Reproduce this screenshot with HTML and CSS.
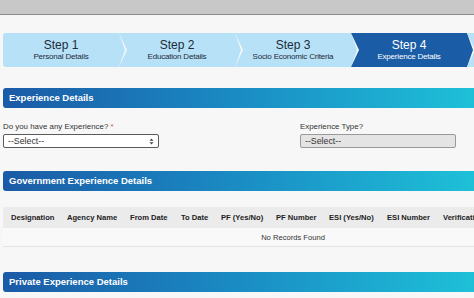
FILE: index.html
```html
<!DOCTYPE html>
<html>
<head>
<meta charset="utf-8">
<link rel="stylesheet" href="styles.css">
</head>
<body>
<div class="topbar"></div>
<div class="page">
  <div class="steps">
    <div class="step first"><div class="st">Step 1</div><div class="sub">Personal Details</div></div>
    <div class="step"><div class="st">Step 2</div><div class="sub">Education Details</div></div>
    <div class="step"><div class="st">Step 3</div><div class="sub">Socio Economic Criteria</div></div>
    <div class="step active"><div class="st">Step 4</div><div class="sub">Experience Details</div></div>
    <div class="step"></div>
  </div>

  <div class="hdr hdr-exp">Experience Details</div>

  <div class="form-row">
    <div class="field">
      <label class="lbl">Do you have any Experience? <span class="req">*</span></label>
      <div class="sel">--Select--
        <svg class="arr" width="5" height="7" viewBox="0 0 5 7"><path d="M2.5 0.5 L4.5 2.8 L0.5 2.8 Z M2.5 6.5 L4.5 4.2 L0.5 4.2 Z" fill="#444"/></svg>
      </div>
    </div>
    <div class="field right">
      <label class="lbl">Experience Type?</label>
      <div class="sel disabled">--Select--</div>
    </div>
  </div>

  <div class="hdr hdr-gov">Government Experience Details</div>

  <div class="tbl-wrap">
    <table class="tbl">
      <thead>
        <tr>
          <th class="c1">Designation</th>
          <th class="c2">Agency Name</th>
          <th class="c3">From Date</th>
          <th class="c4">To Date</th>
          <th class="c5">PF (Yes/No)</th>
          <th class="c6">PF Number</th>
          <th class="c7">ESI (Yes/No)</th>
          <th class="c8">ESI Number</th>
          <th class="c9">Verification</th>
        </tr>
      </thead>
      <tbody>
        <tr><td colspan="9" class="empty">No Records Found</td></tr>
      </tbody>
    </table>
  </div>

  <div class="hdr hdr-priv">Private Experience Details</div>
</div>
</body>
</html>
```

FILE: styles.css
```css
html, body {
  margin: 0;
  padding: 0;
  background: #f7f7f7;
  font-family: "Liberation Sans", Arial, sans-serif;
  overflow: hidden;
  width: 474px;
  height: 298px;
}

.topbar {
  height: 14px;
  background: #c8c8c8;
  border-bottom: 1px solid #8c8c8c;
}

.page {
  padding-left: 3px;
}

.steps {
  display: flex;
  margin-top: 18px;
  height: 34px;
  width: 600px;
}

.step {
  flex: 0 0 122px;
  margin-right: -6px;
  background: #b6e1f7;
  clip-path: polygon(0 0, calc(100% - 6px) 0, 100% 50%, calc(100% - 6px) 100%, 0 100%, 8px 50%);
  display: flex;
  flex-direction: column;
  align-items: center;
  justify-content: center;
  color: #1d2b3a;
  padding-right: 6px;
  box-sizing: border-box;
}

.step.first {
  clip-path: polygon(0 0, calc(100% - 6px) 0, 100% 50%, calc(100% - 6px) 100%, 0 100%);
  border-radius: 3px 0 0 3px;
}

.step.active {
  background: #1b5ca7;
  color: #ffffff;
}

.st {
  font-size: 12px;
  line-height: 13px;
}

.sub {
  font-size: 8px;
  line-height: 10px;
  letter-spacing: -0.2px;
}

.hdr {
  height: 20px;
  line-height: 20px;
  background: linear-gradient(to right, #1b5aa6 0%, #1a8cc4 50%, #1ec0d8 100%);
  color: #ffffff;
  font-weight: bold;
  font-size: 9.5px;
  padding-left: 6px;
  border-radius: 3px 0 0 3px;
}

.hdr-exp { margin-top: 21px; }
.hdr-gov { margin-top: 23px; }
.hdr-priv { margin-top: 25px; }

.form-row {
  display: flex;
  margin-top: 13px;
}

.field {
  width: 156px;
  display: flex;
  flex-direction: column;
}

.field.right {
  margin-left: 141px;
}

.lbl {
  font-size: 7.9px;
  color: #333333;
  line-height: 11px;
  height: 11px;
  margin-bottom: 2px;
}

.req { color: #d9534f; }

.sel {
  position: relative;
  height: 14px;
  box-sizing: border-box;
  border: 1px solid #5a5a5a;
  border-radius: 2px;
  background: #ffffff;
  font-size: 8.8px;
  line-height: 12px;
  padding-left: 4px;
  color: #333333;
}

.sel.disabled {
  background: #e4e4e4;
  border-color: #9a9a9a;
}

.arr {
  position: absolute;
  right: 4px;
  top: 3px;
}

.tbl-wrap {
  margin-top: 16px;
  width: 580px;
}

.tbl {
  border-collapse: collapse;
  table-layout: fixed;
  width: 580px;
  font-size: 7.6px;
  color: #222222;
}

.tbl th {
  background: #ebebeb;
  font-weight: bold;
  height: 21px;
  padding: 0;
  text-align: left;
  white-space: nowrap;
  overflow: hidden;
}

.tbl th.c1 { width: 56px; padding-left: 8px; }
.c2 { width: 63px; }
.c3 { width: 51px; }
.c4 { width: 40px; }
.c5 { width: 55px; }
.c6 { width: 53px; }
.c7 { width: 58px; }
.c8 { width: 56px; }

.empty {
  height: 18px;
  text-align: center;
  color: #333333;
  background: #f9f9f9;
  border-bottom: 1px solid #e4e4e4;
  padding: 0;
}
```
